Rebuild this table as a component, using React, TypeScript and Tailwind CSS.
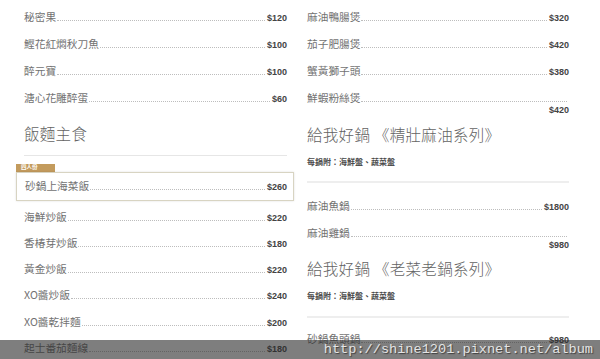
import React from 'react';

type Dish = { name: string; price: string; wrap?: boolean };

const nameFont = { fontFamily: '"Noto Sans CJK TC", "Noto Sans", sans-serif' };

const DishRow = ({ dish, h }: { dish: Dish; h: string }) => {
  return (
    <div>
      <div className={`flex items-center ${h}`}>
        <div className="flex w-full items-baseline">
          <span className="text-[10.7px] text-[#727272] whitespace-nowrap" style={nameFont}>
            {dish.name}
          </span>
          <span className="flex-1 h-0 ml-[1px] mr-[2px] border-b border-dotted border-[#bdbdbd]" />
          {!dish.wrap && (
            <span className="text-[9px] font-bold text-[#444] font-['Liberation_Sans',sans-serif]">
              {dish.price}
            </span>
          )}
        </div>
      </div>
      {dish.wrap && (
        <div className="flex justify-end -mt-[8px] h-[14px] items-center">
          <span className="text-[9px] font-bold text-[#444] font-['Liberation_Sans',sans-serif]">
            {dish.price}
          </span>
        </div>
      )}
    </div>
  );
};

const Heading = ({ children }: { children: React.ReactNode }) => (
  <h2 className="text-[15.5px] font-light leading-[24px] tracking-[0.3px] text-[#636363]" style={nameFont}>
    {children}
  </h2>
);

const Subtitle = () => (
  <p className="text-[8px] font-bold leading-[12px] text-[#4a4a4a]" style={nameFont}>
    每鍋附：海鮮盤、蔬菜盤
  </p>
);

const leftTop: Dish[] = [
  { name: '秘密果', price: '$120' },
  { name: '鰹花紅燜秋刀魚', price: '$100' },
  { name: '醉元寶', price: '$100' },
  { name: '溏心花雕醉蛋', price: '$60' },
];

const leftBottom: Dish[] = [
  { name: '海鮮炒飯', price: '$220' },
  { name: '香椿芽炒飯', price: '$180' },
  { name: '黃金炒飯', price: '$220' },
  { name: 'XO醬炒飯', price: '$240' },
  { name: 'XO醬乾拌麵', price: '$200' },
  { name: '起士番茄麵線', price: '$180' },
];

const rightTop: Dish[] = [
  { name: '麻油鴨腸煲', price: '$320' },
  { name: '茄子肥腸煲', price: '$420' },
  { name: '蟹黃獅子頭', price: '$380' },
  { name: '鮮蝦粉絲煲', price: '$420', wrap: true },
];

const App = () => {
  return (
    <div className="relative w-[600px] h-[359px] overflow-hidden bg-white">
      <div className="flex gap-[20px] pl-[24px] pt-[4px]">
        {/* left column */}
        <div className="w-[263px] flex flex-col">
          {leftTop.map((d) => (
            <DishRow key={d.name} dish={d} h="h-[27px]" />
          ))}
          <div className="mt-[9px]">
            <Heading>飯麵主食</Heading>
          </div>
          <div className="mt-[10px] h-px bg-[#e6e6e6]" />

          {/* featured */}
          <div className="mt-[8px] -ml-[8px] -mr-[7px]">
            <div className="w-[39px] h-[8px] bg-[#c39b5d] flex items-center pl-[5px]">
              <span className="text-[5.5px] leading-none text-white font-bold" style={nameFont}>
                四人份
              </span>
            </div>
            <div className="h-[29px] border border-[#d8d4c2] shadow-[0_0_2px_rgba(0,0,0,0.12)] pl-[8px] pr-[6px] flex items-center">
              <div className="w-full">
                <DishRow dish={{ name: '砂鍋上海菜飯', price: '$260' }} h="h-[27px]" />
              </div>
            </div>
          </div>

          <div className="mt-[3px]">
            {leftBottom.map((d) => (
              <DishRow key={d.name} dish={d} h="h-[26.2px]" />
            ))}
          </div>
        </div>

        {/* right column */}
        <div className="w-[262px] flex flex-col">
          {rightTop.map((d) => (
            <DishRow key={d.name} dish={d} h="h-[27px]" />
          ))}
          <div className="mt-[4px]">
            <Heading>給我好鍋 《精壯麻油系列》</Heading>
          </div>
          <div className="mt-[10px]">
            <Subtitle />
          </div>
          <div className="mt-[13px] h-[2px] bg-[#eeeeee]" />
          <div className="mt-[10px]">
            <DishRow dish={{ name: '麻油魚鍋', price: '$1800' }} h="h-[27px]" />
            <DishRow dish={{ name: '麻油雞鍋', price: '$980', wrap: true }} h="h-[27px]" />
          </div>
          <div className="mt-[3px]">
            <Heading>給我好鍋 《老菜老鍋系列》</Heading>
          </div>
          <div className="mt-[10px]">
            <Subtitle />
          </div>
          <div className="mt-[14px] h-[2px] bg-[#eeeeee]" />
          <div className="mt-[8px]">
            <DishRow dish={{ name: '砂鍋魚頭鍋', price: '$980' }} h="h-[27px]" />
          </div>
        </div>
      </div>

      {/* watermark bar */}
      <div className="absolute left-0 right-0 bottom-0 h-[19px] bg-[rgba(40,40,40,0.6)] flex items-center justify-end pr-[7px]">
        <span className="text-[13.6px] leading-none text-[#e4e4e4] font-['Liberation_Mono',monospace] [text-shadow:1px_1px_1px_rgba(0,0,0,0.5)]">
          http://shine1201.pixnet.net/album
        </span>
      </div>
    </div>
  );
};

export default App;
